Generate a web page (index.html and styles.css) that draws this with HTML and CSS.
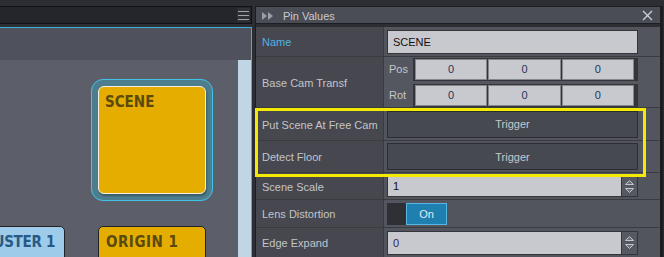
FILE: index.html
```html
<!DOCTYPE html>
<html>
<head>
<meta charset="utf-8">
<link rel="stylesheet" href="styles.css">
</head>
<body>
<div class="app">
  <div class="left">
    <div class="lhead">
      <div class="menu">
        <svg width="11" height="9" viewBox="0 0 11 9"><path d="M0 0.5H11M0 4.5H11M0 8.5H11" stroke="#a3a4a9" stroke-width="1"/></svg>
      </div>
    </div>
    <div class="canvas">
      <div class="band"></div>
      <div class="area"><div class="scroll"></div></div>
      <div class="sel"><div class="node gold big"><span>SCENE</span></div></div>
      <div class="node blue cluster"><span>CLUSTER 1</span></div>
      <div class="node gold origin"><span>ORIGIN 1</span></div>
    </div>
  </div>
  <div class="right">
    <div class="rhead">
      <svg class="ff" width="12" height="8" viewBox="0 0 12 8"><path d="M0 0L5 4L0 8Z M6 0L11 4L6 8Z" fill="#9c9ea6"/></svg>
      <span class="title">Pin Values</span>
      <svg class="close" width="11" height="11" viewBox="0 0 11 11"><path d="M1 1L10 10M10 1L1 10" stroke="#cfd0d4" stroke-width="1.3"/></svg>
    </div>
    <div class="rbody">
      <div class="row r-name">
        <div class="lab name">Name</div>
        <div class="val"><div class="inp"><span class="txt">SCENE</span></div></div>
      </div>
      <div class="row r-base">
        <div class="lab">Base Cam Transf</div>
        <div class="val vecs">
          <div class="vline"><span class="sub">Pos</span><div class="grp"><div class="box">0</div><div class="box">0</div><div class="box">0</div></div></div>
          <div class="vline"><span class="sub">Rot</span><div class="grp"><div class="box">0</div><div class="box">0</div><div class="box">0</div></div></div>
        </div>
      </div>
      <div class="row r-put">
        <div class="lab">Put Scene At Free Cam</div>
        <div class="val"><div class="btn">Trigger</div></div>
      </div>
      <div class="row r-det">
        <div class="lab">Detect Floor</div>
        <div class="val"><div class="btn">Trigger</div></div>
      </div>
      <div class="row r-scale">
        <div class="lab">Scene Scale</div>
        <div class="val"><div class="inp spin-inp"><span class="txt">1</span><div class="spin"><svg width="11" height="15" viewBox="0 0 11 15"><path d="M5.5 1.5L9.5 5.5H1.5Z M5.5 13.5L9.5 9.5H1.5Z" fill="#6d6f77" stroke="#c3c5ca" stroke-width="1"/></svg></div></div></div>
      </div>
      <div class="row r-lens">
        <div class="lab">Lens Distortion</div>
        <div class="val"><div class="tog"><div class="off"></div><div class="on">On</div></div></div>
      </div>
      <div class="row r-edge">
        <div class="lab">Edge Expand</div>
        <div class="val"><div class="inp spin-inp"><span class="txt zero">0</span><div class="spin"><svg width="11" height="15" viewBox="0 0 11 15"><path d="M5.5 1.5L9.5 5.5H1.5Z M5.5 13.5L9.5 9.5H1.5Z" fill="#6d6f77" stroke="#c3c5ca" stroke-width="1"/></svg></div></div></div>
      </div>
    </div>
    <div class="hl"></div>
  </div>
</div>
</body>
</html>
```
FILE: styles.css
```css
html, body { margin: 0; padding: 0; }
body {
  width: 664px;
  height: 257px;
  overflow: hidden;
  background: #2d2e33;
  font-family: "Liberation Sans", Arial, sans-serif;
  font-size: 11px;
}
.app {
  display: flex;
  height: 257px;
  padding-top: 6px;
  box-sizing: border-box;
  gap: 3px;
}
.left {
  width: 252px;
  display: flex;
  flex-direction: column;
  gap: 3px;
}
.lhead {
  height: 18px;
  box-sizing: border-box;
  background: #25262b;
  border-top: 1px solid #111215;
  border-bottom: 1px solid #111215;
  border-right: 1px solid #111215;
  display: flex;
  justify-content: flex-end;
  align-items: center;
  padding-right: 1px;
}
.menu {
  width: 13px;
  height: 14px;
  background: #303137;
  display: flex;
  align-items: center;
  justify-content: center;
}
.canvas {
  flex: 1;
  position: relative;
  border-top: 1px solid #39b3dc;
  border-right: 1px solid #39b3dc;
  display: flex;
  flex-direction: column;
  overflow: hidden;
}
.band { height: 32px; background: #4f515c; }
.area { flex: 1; display: flex; background: #5c5e6a; }
.scroll { width: 13px; margin-left: auto; background: #c1d6e4; }

.node {
  position: absolute;
  box-sizing: border-box;
  font-family: "DejaVu Sans Condensed", "DejaVu Sans", sans-serif;
  font-stretch: condensed;
  font-weight: bold;
  font-size: 15px;
}
.gold { background: #e4ad00; color: #5b4a0e; }
.blue { background: #9dcbe9; color: #285a85; }
.sel {
  position: absolute;
  left: 91px;
  top: 51px;
  width: 122px;
  height: 122px;
  box-sizing: border-box;
  border: 1px solid #3fc6ea;
  border-radius: 12px;
  background: #4e7e8e;
  padding: 6px;
}
.big {
  position: static;
  width: 100%;
  height: 100%;
  border: 1px solid #f4f1e4;
  border-radius: 6px;
  padding: 6px 0 0 6px;
  box-shadow: 1px 2px 2px rgba(30, 50, 60, 0.45);
}
.origin {
  left: 98px;
  top: 198px;
  width: 108px;
  height: 60px;
  border: 1px solid #222326;
  border-radius: 5px;
  padding: 6px 0 0 7px;
  letter-spacing: 0.5px;
}
.cluster {
  left: -60px;
  top: 198px;
  width: 125px;
  height: 60px;
  border: 1px solid #222326;
  border-radius: 5px;
  padding: 6px 9px 0 0;
  text-align: right;
  letter-spacing: -0.3px;
}

.right {
  position: relative;
  width: 408px;
  box-sizing: border-box;
  border-left: 1px solid #1d1e22;
  border-right: 3px solid #1d1e22;
  display: flex;
  flex-direction: column;
  gap: 3px;
}
.rhead {
  height: 18px;
  flex: none;
  box-sizing: border-box;
  background: #4b4d56;
  border-top: 1px solid #1d1e22;
  border-bottom: 1px solid #1d1e22;
  display: flex;
  align-items: center;
  padding-left: 6px;
  padding-top: 1px;
  color: #c9cace;
}
.title { margin-left: 9px; }
.close { margin-left: auto; margin-right: 7px; }
.rbody {
  flex: 1;
  background: #53555e;
  display: flex;
  flex-direction: column;
  color: #c3c5ca;
}
.row {
  display: flex;
  flex: none;
  box-sizing: border-box;
  border-bottom: 1px solid #3a3b41;
}
.lab {
  width: 128px;
  box-sizing: border-box;
  background: #46474f;
  border-right: 1px solid #3a3b41;
  padding-left: 6px;
  padding-top: 1px;
  display: flex;
  align-items: center;
}
.lab.name { color: #4fb3e2; }
.val {
  flex: 1;
  display: flex;
  align-items: center;
  padding-left: 3px;
}
.r-name { height: 30px; }
.r-base { height: 51px; }
.r-put { height: 33px; }
.r-det { height: 32px; }
.r-scale { height: 27px; }
.r-lens { height: 28px; }
.r-edge { height: 29px; border-bottom: none; }

.inp {
  width: 251px;
  height: 24px;
  box-sizing: border-box;
  background: #c8c9ce;
  border: 1px solid #34353b;
  display: flex;
  align-items: center;
  color: #111;
}
.txt { padding-left: 5px; flex: 1; }
.zero { color: #3a2350; }
.r-scale .inp { height: 22px; }
.spin {
  width: 15px;
  height: 100%;
  background: #575962;
  border-left: 1px solid #34353b;
  display: flex;
  align-items: center;
  justify-content: center;
}

.vecs {
  flex-direction: column;
  align-items: stretch;
  justify-content: center;
  gap: 3px;
  padding-left: 0;
  background: #555760;
}
.vline { display: flex; align-items: center; }
.sub { width: 29px; box-sizing: border-box; padding-left: 5px; }
.grp {
  width: 225px;
  height: 23px;
  box-sizing: border-box;
  background: #34353b;
  padding: 1px 4px 1px 2px;
  display: flex;
  gap: 1px;
}
.box {
  flex: 1;
  box-sizing: border-box;
  background: #c8c9ce;
  border: 1px solid #85868c;
  display: flex;
  align-items: center;
  justify-content: center;
  color: #22345e;
}

.btn {
  width: 251px;
  height: 27px;
  box-sizing: border-box;
  background: #474951;
  border: 1px solid #2c2d32;
  display: flex;
  align-items: center;
  justify-content: center;
  color: #c6c8cc;
}

.tog {
  display: flex;
  height: 22px;
}
.tog .off { width: 19px; background: #2f3035; }
.tog .on {
  width: 41px;
  box-sizing: border-box;
  background: #1f7fae;
  border: 1px solid #57b7e2;
  color: #e2ebf2;
  display: flex;
  align-items: center;
  justify-content: center;
}

.hl {
  position: absolute;
  left: -1px;
  top: 102px;
  width: 391px;
  height: 69px;
  box-sizing: border-box;
  border: 3px solid #f4e900;
  pointer-events: none;
}
```
